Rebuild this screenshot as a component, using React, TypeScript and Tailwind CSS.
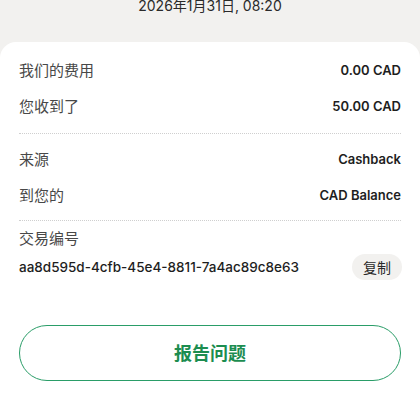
import React from 'react';

const FONT = { fontFamily: 'Inter, "Noto Sans CJK SC", sans-serif' };

function Row({ label, value }: { label: string; value: string }) {
  return (
    <div className="flex h-[36px] items-center justify-between">
      <span className="text-[15px] text-[#484848]">{label}</span>
      <span className="text-[13px] font-semibold text-[#1e1e1e]">{value}</span>
    </div>
  );
}

function Divider() {
  return <div className="border-t border-dotted border-[#cfcfcf]" />;
}

export default function App() {
  return (
    <div className="flex h-[420px] w-[420px] flex-col overflow-hidden bg-[#f2f1ef]" style={FONT}>
      {/* date header, scrolled partly out of view */}
      <div className="-mt-[4px] h-[46px] text-center text-[14px] leading-[20px] text-[#2a2a2a]">
        2026年1月31日, 08:20
      </div>

      {/* details card */}
      <div className="flex flex-1 flex-col rounded-t-[16px] bg-white px-[19px] pt-[11px]">
        <Row label="我们的费用" value="0.00 CAD" />
        <Row label="您收到了" value="50.00 CAD" />
        <div className="pt-[8px]">
          <Divider />
        </div>
        <div className="pt-[8px]">
          <Row label="来源" value="Cashback" />
          <Row label="到您的" value="CAD Balance" />
        </div>
        <div className="pt-[6px]">
          <Divider />
        </div>
        <div className="pt-[7px] text-[15px] leading-[22px] text-[#484848]">交易编号</div>
        <div className="mt-[4px] flex h-[26px] items-center justify-between">
          <span className="text-[13.5px] font-medium text-[#1e1e1e]">
            aa8d595d-4cfb-45e4-8811-7a4ac89c8e63
          </span>
          <button className="-mr-[1px] h-[26px] rounded-full bg-[#f2f1ef] px-[11px] text-[14px] text-[#2a2a2a]">
            复制
          </button>
        </div>

        <button className="mt-[45px] flex h-[56px] w-full items-center justify-center rounded-full border border-[#2a9d68] text-[18px] font-bold text-[#1c8d50]">
          报告问题
        </button>
      </div>
    </div>
  );
}
